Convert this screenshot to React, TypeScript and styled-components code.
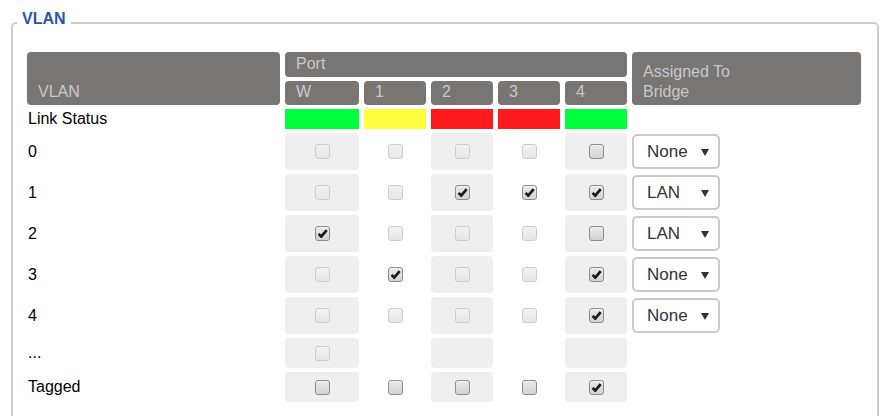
import React from "react";
import styled, { createGlobalStyle } from "styled-components";

const GlobalStyle = createGlobalStyle`
  body {
    margin: 0;
    background: #ffffff;
    font-family: "Liberation Sans", Arial, sans-serif;
  }
`;

const Page = styled.div`
  padding: 10px 15px 0 11px;
`;

const Box = styled.fieldset`
  margin: 0;
  padding: 16px 16px 40px 14px;
  border: 2px solid #cccccc;
  border-radius: 5px;
`;

const Legend = styled.legend`
  margin-left: -10px;
  padding: 0 5px 8px 5px;
  font-size: 16px;
  font-weight: bold;
  color: #2b55a5;
`;

const Grid = styled.div`
  display: grid;
  grid-template-columns: 253px 74px 62px 62px 62px 62px 229px;
  grid-template-rows: 25px 24px 20px repeat(5, 37px) 30px 30px;
  column-gap: 5px;
  row-gap: 4px;
  font-size: 16px;
  color: #000000;
`;

const Head = styled.div<{ $col: string; $row: string }>`
  grid-column: ${(p) => p.$col};
  grid-row: ${(p) => p.$row};
  display: flex;
  align-items: flex-end;
  padding: 0 10px 3px 11px;
  background: #787573;
  color: #c9c9c9;
  border-radius: 4px;
  line-height: 20px;
`;

const Label = styled.div`
  grid-column: 1;
  display: flex;
  align-items: center;
  padding-left: 1px;
`;

const Status = styled.div<{ $color: string }>`
  background: ${(p) => p.$color};
`;

const Cell = styled.div<{ $shaded: boolean }>`
  display: flex;
  align-items: center;
  justify-content: center;
  border-radius: 4px;
  background: ${(p) => (p.$shaded ? "#efefef" : "transparent")};
`;

const Box15 = styled.span<{ $enabled: boolean }>`
  display: flex;
  align-items: center;
  justify-content: center;
  width: 13px;
  height: 13px;
  border-radius: 3px;
  border: 1px solid ${(p) => (p.$enabled ? "#8c8c8c" : "#cdcdcd")};
  background: ${(p) =>
    p.$enabled
      ? "linear-gradient(#e9e9e9, #d3d3d3)"
      : "linear-gradient(#f3f3f3, #e6e6e6)"};
  box-shadow: ${(p) =>
    p.$enabled ? "inset 0 1px 1px rgba(255,255,255,0.6)" : "none"};
`;

const SelectWrap = styled.div`
  grid-column: 7;
  align-self: center;
  display: flex;
  align-items: center;
  justify-content: space-between;
  width: 88px;
  height: 35px;
  box-sizing: border-box;
  padding: 0 9px 0 13px;
  border: 2px solid #cacaca;
  border-radius: 5px;
  background: #ffffff;
  color: #333333;
  font-size: 17px;
`;

type Mark = "d" | "e" | "c" | null;

const Checkbox = ({ mark }: { mark: Exclude<Mark, null> }) => (
  <Box15 $enabled={mark !== "d"}>
    {mark === "c" && (
      <svg width="11" height="11" viewBox="0 0 11 11">
        <path
          d="M1.6 5.9 L4.2 8.7 L9.7 2.1"
          fill="none"
          stroke="#1a1a1a"
          strokeWidth="2.7"
          strokeLinejoin="round"
        />
      </svg>
    )}
  </Box15>
);

const Arrow = () => (
  <svg width="8" height="8" viewBox="0 0 8 8">
    <path d="M0 1 L8 1 L4 8 Z" fill="#333333" />
  </svg>
);

const ports = ["W", "1", "2", "3", "4"];
const linkColors = ["#00ff3c", "#ffff40", "#ff1a1f", "#ff1a1f", "#00ff3c"];

const rows: { label: string; marks: Mark[]; bridge?: string }[] = [
  { label: "0", marks: ["d", "d", "d", "d", "e"], bridge: "None" },
  { label: "1", marks: ["d", "d", "c", "c", "c"], bridge: "LAN" },
  { label: "2", marks: ["c", "d", "d", "d", "e"], bridge: "LAN" },
  { label: "3", marks: ["d", "c", "d", "d", "c"], bridge: "None" },
  { label: "4", marks: ["d", "d", "d", "d", "c"], bridge: "None" },
  { label: "...", marks: ["d", null, null, null, null] },
  { label: "Tagged", marks: ["e", "e", "e", "e", "c"] },
];

const App: React.FC = () => (
  <Page>
    <GlobalStyle />
    <Box>
      <Legend>VLAN</Legend>
      <Grid>
        <Head $col="1" $row="1 / span 2">VLAN</Head>
        <Head $col="2 / span 5" $row="1">Port</Head>
        {ports.map((p, i) => (
          <Head key={p} $col={String(i + 2)} $row="2">
            {p}
          </Head>
        ))}
        <Head $col="7" $row="1 / span 2">
          Assigned To
          <br />
          Bridge
        </Head>

        <Label>Link Status</Label>
        {linkColors.map((c, i) => (
          <Status key={i} $color={c} />
        ))}
        <div />

        {rows.map((r) => (
          <React.Fragment key={r.label}>
            <Label>{r.label}</Label>
            {r.marks.map((m, i) => (
              <Cell key={i} $shaded={i % 2 === 0}>
                {m && <Checkbox mark={m} />}
              </Cell>
            ))}
            {r.bridge ? (
              <SelectWrap>
                <span>{r.bridge}</span>
                <Arrow />
              </SelectWrap>
            ) : (
              <div />
            )}
          </React.Fragment>
        ))}
      </Grid>
    </Box>
  </Page>
);

export default App;
